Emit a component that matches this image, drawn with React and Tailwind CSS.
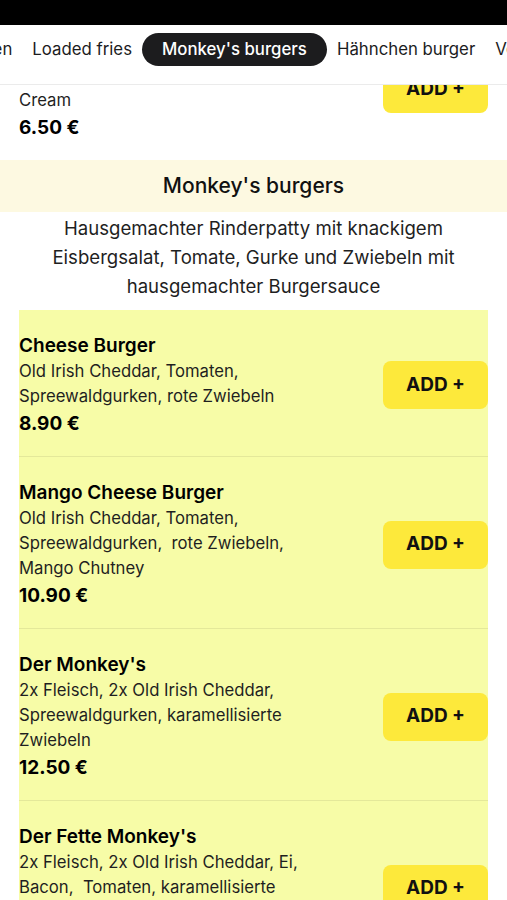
import React from 'react';

const tabs = ['Beilagen', 'Loaded fries', "Monkey's burgers", 'Hähnchen burger', 'Veggie burger'];

const burgers = [
    {
        name: 'Cheese Burger',
        desc: ['Old Irish Cheddar, Tomaten,', 'Spreewaldgurken, rote Zwiebeln'],
        price: '8.90 €',
    },
    {
        name: 'Mango Cheese Burger',
        desc: ['Old Irish Cheddar, Tomaten,', 'Spreewaldgurken,  rote Zwiebeln,', 'Mango Chutney'],
        price: '10.90 €',
    },
    {
        name: "Der Monkey's",
        desc: ['2x Fleisch, 2x Old Irish Cheddar,', 'Spreewaldgurken, karamellisierte', 'Zwiebeln'],
        price: '12.50 €',
    },
    {
        name: "Der Fette Monkey's",
        desc: ['2x Fleisch, 2x Old Irish Cheddar, Ei,', 'Bacon,  Tomaten, karamellisierte', 'Zwiebeln'],
        price: '13.90 €',
    },
];

const MenuItem = ({ item, last }) => (
    <div className={`flex items-center pt-[23px] pb-[19px] ${last ? '' : 'border-b border-[#e4e89a]'}`}>
        <div className="flex-1 min-w-0">
            <div className="text-[19px] leading-[26px] font-semibold text-black">{item.name}</div>
            {item.desc.map((line, i) => (
                <div key={i} className="text-[16.7px] leading-[25px] text-[#1f1f1f] whitespace-pre">
                    {line}
                </div>
            ))}
            <div className="mt-[2px] text-[19px] leading-[26px] font-bold text-black">{item.price}</div>
        </div>
        <button className="w-[105px] h-[48px] shrink-0 rounded-[8px] bg-[#fde93b] text-[19px] font-bold text-[#111]">
            ADD +
        </button>
    </div>
);

export default function App() {
    return (
        <div className="w-[507px] h-[900px] overflow-hidden bg-white flex flex-col" style={{ fontFamily: 'Inter, "Noto Sans", sans-serif' }}>
            <div className="h-[25px] bg-black shrink-0" />

            <div className="h-[60px] shrink-0 bg-white border-b border-[#ebebeb] overflow-hidden relative z-10">
                <div className="flex pt-[8px] -ml-[66px] whitespace-nowrap">
                    {tabs.map((t) => {
                        const active = t === "Monkey's burgers";
                        return (
                            <div
                                key={t}
                                className={`h-[33px] flex items-center shrink-0 text-[16.8px] ${
                                    active
                                        ? 'px-[20px] rounded-full bg-[#1c1c1e] text-white font-medium'
                                        : 'px-[10px] text-[#1c1c1e]'
                                }`}
                            >
                                {t}
                            </div>
                        );
                    })}
                </div>
            </div>

            <div className="flex-1 overflow-hidden">
                <div className="-mt-[71px]">
                    {/* last item of the previous category, scrolled under the tabs */}
                    <div className="px-[19px]">
                        <MenuItem
                            item={{ name: 'Milchshake', desc: ['Frischer Shake mit Vanille Ice', 'Cream'], price: '6.50 €' }}
                            last
                        />
                    </div>

                    <div className="h-[52px] bg-[#fdf9e1] flex items-center justify-center">
                        <h2 className="text-[21px] font-medium text-[#111]">Monkey's burgers</h2>
                    </div>
                    <p className="pt-[2px] pb-[9px] text-center text-[18.6px] leading-[29px] text-[#1f1f1f]">
                        Hausgemachter Rinderpatty mit knackigem
                        <br />
                        Eisbergsalat, Tomate, Gurke und Zwiebeln mit
                        <br />
                        hausgemachter Burgersauce
                    </p>

                    <div className="mx-[19px] bg-[#f7fca7]">
                        {burgers.map((b, i) => (
                            <MenuItem key={b.name} item={b} last={i === burgers.length - 1} />
                        ))}
                    </div>
                </div>
            </div>
        </div>
    );
}
